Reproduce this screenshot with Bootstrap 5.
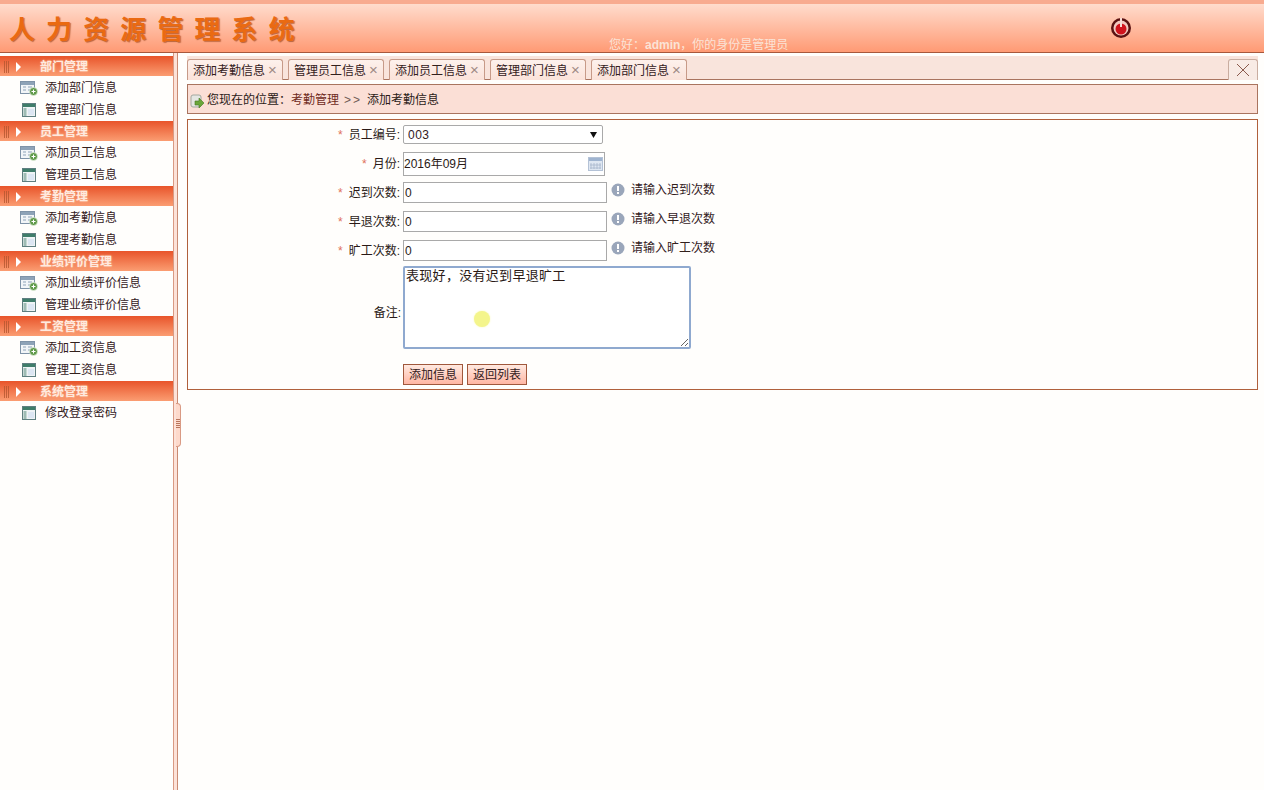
<!DOCTYPE html>
<html lang="zh-CN">
<head>
  <meta charset="UTF-8" />
  <title>人力资源管理系统</title>
  <meta name="viewport" content="width=device-width, initial-scale=1" />
  <link href="https://cdn.jsdelivr.net/npm/bootstrap@5.3.3/dist/css/bootstrap.min.css" rel="stylesheet" />
  <style>
    html, body { height: 100%; }
    body { background: #fffefc; color: #2a1a16; overflow: hidden; font: 12px/1.3 "Liberation Sans", "Noto Sans CJK SC", sans-serif; }
    .top-bar { height: 53px; border-top: 4px solid #f8ab90; border-bottom: 1px solid #a8583c; background: linear-gradient(#ffdccd, #ff9a74); overflow: hidden; }
    .sys-title { margin: 0 0 0 9px; font: 700 26px/1 "Noto Sans CJK SC", sans-serif; letter-spacing: 11.1px; color: #ea6a12; text-shadow: 1px 1px 1px #b9643c; white-space: nowrap; }
    .hello-text { position: absolute; left: 609px; top: 34px; color: #fbe3d6; font-size: 12px; line-height: 14px; white-space: nowrap; }
    .power-btn { position: absolute; left: 1110px; top: 13px; }
    .body-wrap { height: 737px; }
    .side-menu { width: 173px; flex: none; padding-top: 3px; }
    .menu-head { height: 20px; padding-top: 2px; background: linear-gradient(#e8542a, #fb9d72); color: #ffeadf; font-weight: 700; font-size: 12px; line-height: 18px; text-shadow: 0 0 2px #f9c4a8; }
    .grip { width: 5px; height: 12px; margin-left: 4px; background: repeating-linear-gradient(90deg, #b5562f 0 1px, transparent 1px 2px); opacity: .8; }
    .arrow-r { width: 0; height: 0; margin-left: 7px; margin-right: 19px; border-left: 5px solid #fff; border-top: 5px solid transparent; border-bottom: 5px solid transparent; }
    .menu-list { margin-bottom: 1px; }
    .menu-list .list-group-item { height: 22px; padding: 2px 0 0 20px; border: 0; background: transparent; color: #33201c; font-size: 12px; line-height: 20px; gap: 7px; }
    .split-bar { width: 5px; flex: none; background: #fde2d8; border-left: 1px solid #d99a84; border-right: 1px solid #c98a72; position: relative; }
    .split-handle { position: absolute; left: 2px; top: 350px; width: 5px; height: 44px; background: #fdd9cb; border: 1px solid #d99a84; border-left: 0; border-radius: 0 4px 4px 0; }
    .split-handle i { display: block; width: 4px; height: 1px; margin-bottom: 1px; background: #b9755c; }
    .split-handle span { display: block; padding-top: 15px; }
    .main-area { flex: 1; padding: 3px 6px 0 9px; min-width: 0; }
    .tab-strip { height: 24px; background: #f9e4dc; border-bottom: 1px solid #a9745f; padding-top: 3px; gap: 5px; position: relative; }
    .tab-item { width: 96px; height: 21px; padding-left: 5px; border: 1px solid #c79a88; border-bottom: 0; border-radius: 3px 3px 0 0; background: linear-gradient(#fdf1ec, #fbe2d9); color: #33201c; line-height: 19px; white-space: nowrap; }
    .tab-x { color: #a08a84; font-size: 15px; margin-left: 3px; }
    .tab-close { position: absolute; right: 0; top: 3px; width: 30px; height: 21px; border: 1px solid #c9ada0; border-bottom: 0; border-radius: 3px 3px 0 0; background: #f8ebe5; }
    .crumb-bar { height: 30px; margin-top: 4px; background: #fbdfd6; border: 1px solid #a9745f; padding: 3px 0 0 2px; gap: 2px; font-size: 12px; }
    .crumb-cur { color: #6e2a1c; }
    .crumb-sep { color: #6f5a55; margin: 0 5px; letter-spacing: 2px; }
    .form-box { height: 271px; margin-top: 5px; border: 1px solid #b0603c; padding-top: 5px; }
    .f-label { width: 215px; flex: none; padding: 2px 3px 0 0; text-align: right; font-size: 12px; white-space: nowrap; }
    .star { color: #e0705a; margin-right: 6px; }
    .f-sel { width: 200px; height: 19px; padding: 0 4px; border: 1px solid #a9a9a9; border-radius: 2px; background: #fff url("data:image/svg+xml,%3Csvg xmlns='http://www.w3.org/2000/svg' width='7' height='6'%3E%3Cpath d='M0 0h7L3.5 6z' fill='%23111'/%3E%3C/svg%3E") no-repeat 186px 6px; appearance: none; color: #33201c; font: 12px "Liberation Sans", sans-serif; letter-spacing: .5px; }
    .f-input { height: 21px; width: 204px; padding: 0 1px; border: 1px solid #a9a9a9; background: #fff; color: #2a1a16; font: 12px "Liberation Sans", "Noto Sans CJK SC", sans-serif; }
    .f-month-wrap { position: relative; width: 202px; height: 24px; }
    .f-month-wrap .f-input { width: 202px; height: 24px; padding: 0 0 3px; }
    .cal-ico { position: absolute; right: 2px; top: 5px; }
    .hint-ico { margin-left: 4px; margin-top: -5px; }
    .hint-text { margin-left: 6px; margin-top: -4px; color: #33201c; }
    .f-area { width: 288px; height: 83px; padding: 0 1px; border: 2px solid #8fa9cf; border-radius: 2px; background: #fff; color: #2a1a16; font: 13px/1.1 "Noto Sans CJK SC", sans-serif; letter-spacing: .3px; outline: none; }
    .f-note { margin-top: 10px; padding-right: 2px; }
    .f-btn { width: 60px; height: 21px; padding: 2px 0 0; border: 1px solid #a0583c; background: linear-gradient(#ffe9e0, #ffb7a4); color: #33201c; font-size: 12px; line-height: 17px; }
    .space-6 { margin-bottom: 6px; }
    .space-5 { margin-bottom: 5px; }
    .space-15 { margin-bottom: 15px; }
    .cursor-dot { position: absolute; left: 474px; top: 311px; width: 16px; height: 16px; border-radius: 50%; background: #f4f58c; box-shadow: 0 0 2px #f8f9b0; }
  </style>
</head>
<body>

<header class="top-bar position-relative d-flex align-items-center">
  <h1 class="sys-title">人力资源管理系统</h1>
  <div class="hello-text">您好：<b>admin</b>，你的身份是管理员</div>
  <svg class="power-btn" width="22" height="22" viewBox="0 0 22 22">
    <circle cx="11" cy="11" r="10" fill="#5a1212"/>
    <circle cx="11" cy="11" r="7.5" fill="#f3c9c0"/>
    <circle cx="11" cy="12" r="5.5" fill="#d0131d"/>
    <rect x="10" y="1" width="2" height="9" fill="#f6dcd6"/>
  </svg>
</header>

<div class="body-wrap d-flex">
  <aside class="side-menu" id="sideMenu"></aside>

  <div class="split-bar">
    <div class="split-handle"><span><i></i><i></i><i></i><i></i><i></i></span></div>
  </div>

  <main class="main-area">
    <div class="tab-strip d-flex" id="tabStrip">
      <div class="tab-close d-flex align-items-center justify-content-center">
        <svg width="14" height="14" viewBox="0 0 14 14"><path d="M1 1l12 12M13 1L1 13" stroke="#8a5a4c" stroke-width="1"/></svg>
      </div>
    </div>

    <div class="crumb-bar d-flex align-items-center">
      <svg width="15" height="16" viewBox="0 0 15 16">
        <rect x="1" y="2" width="10" height="12" rx="2" fill="#e4e6e2" stroke="#a3a8a0"/>
        <path d="M5 8h4V5l5 5-5 5v-3H5z" fill="#6aa63a" stroke="#437a22" stroke-width=".6"/>
      </svg>
      <span>您现在的位置：<span class="crumb-cur">考勤管理</span><span class="crumb-sep">&gt;&gt;</span>添加考勤信息</span>
    </div>

    <form class="form-box">
      <div class="d-flex align-items-center mb-2">
        <div class="f-label"><span class="star">*</span>员工编号:</div>
        <select class="f-sel"><option>003</option></select>
      </div>
      <div class="d-flex align-items-center space-6">
        <div class="f-label"><span class="star">*</span>月份:</div>
        <div class="f-month-wrap">
          <input class="f-input" type="text" value="2016年09月" />
          <svg class="cal-ico" width="15" height="14" viewBox="0 0 15 14">
            <rect x=".5" y=".5" width="14" height="13" fill="#dfe7f2" stroke="#b4c2d6"/>
            <rect x="1" y="1" width="13" height="3" fill="#9fb4d0"/>
            <path d="M3 6v6M6 6v6M9 6v6M12 6v6M2 8h11M2 11h11" stroke="#a6b6cc" stroke-width=".8"/>
          </svg>
        </div>
      </div>
      <div class="d-flex align-items-center mb-2">
        <div class="f-label"><span class="star">*</span>迟到次数:</div>
        <input class="f-input" type="text" value="0" />
        <svg class="hint-ico" width="14" height="14" viewBox="0 0 14 14"><circle cx="7" cy="7" r="6.5" fill="#9aa6ba"/><rect x="6" y="3" width="2" height="5" fill="#fff"/><rect x="6" y="9" width="2" height="2" fill="#fff"/></svg>
        <span class="hint-text">请输入迟到次数</span>
      </div>
      <div class="d-flex align-items-center mb-2">
        <div class="f-label"><span class="star">*</span>早退次数:</div>
        <input class="f-input" type="text" value="0" />
        <svg class="hint-ico" width="14" height="14" viewBox="0 0 14 14"><circle cx="7" cy="7" r="6.5" fill="#9aa6ba"/><rect x="6" y="3" width="2" height="5" fill="#fff"/><rect x="6" y="9" width="2" height="2" fill="#fff"/></svg>
        <span class="hint-text">请输入早退次数</span>
      </div>
      <div class="d-flex align-items-center space-5">
        <div class="f-label"><span class="star">*</span>旷工次数:</div>
        <input class="f-input" type="text" value="0" />
        <svg class="hint-ico" width="14" height="14" viewBox="0 0 14 14"><circle cx="7" cy="7" r="6.5" fill="#9aa6ba"/><rect x="6" y="3" width="2" height="5" fill="#fff"/><rect x="6" y="9" width="2" height="2" fill="#fff"/></svg>
        <span class="hint-text">请输入旷工次数</span>
      </div>
      <div class="d-flex align-items-center space-15">
        <div class="f-label f-note">备注:</div>
        <textarea class="f-area">表现好，没有迟到早退旷工</textarea>
      </div>
      <div class="d-flex">
        <div class="f-label"></div>
        <button type="button" class="f-btn me-1">添加信息</button>
        <button type="button" class="f-btn">返回列表</button>
      </div>
    </form>
  </main>
</div>

<div class="cursor-dot"></div>

<script>
  const ICON_ADD = `<svg width="18" height="16" viewBox="0 0 18 16">
    <rect x=".5" y="1.5" width="14" height="12" fill="#f2f5f8" stroke="#7f93a8"/>
    <rect x="1" y="2" width="13" height="3" fill="#8ea3b8"/>
    <path d="M3 7h3M3 10h3M8 7h4M8 10h2" stroke="#8ea3b8"/>
    <circle cx="13.5" cy="11.5" r="4" fill="#5f9a4a" stroke="#eef5ea" stroke-width=".7"/>
    <path d="M11.5 11.5h4M13.5 9.5v4" stroke="#fff"/></svg>`;
  const ICON_MANAGE = `<svg width="18" height="16" viewBox="0 0 18 16">
    <rect x="2.5" y="1.5" width="13" height="13" fill="#eef3f5" stroke="#5f7f80"/>
    <rect x="3" y="2" width="12" height="3" fill="#3f7d6a"/>
    <rect x="3.5" y="6" width="3" height="8" fill="#9ebcb4"/>
    <rect x="8" y="7" width="6" height="6" fill="#dce6f2"/></svg>`;

  const menus = [
    { title: "部门管理", items: ["添加部门信息", "管理部门信息"] },
    { title: "员工管理", items: ["添加员工信息", "管理员工信息"] },
    { title: "考勤管理", items: ["添加考勤信息", "管理考勤信息"] },
    { title: "业绩评价管理", items: ["添加业绩评价信息", "管理业绩评价信息"] },
    { title: "工资管理", items: ["添加工资信息", "管理工资信息"] },
    { title: "系统管理", items: ["修改登录密码"] }
  ];
  const side = document.getElementById("sideMenu");
  menus.forEach(menu => {
    const rows = menu.items.map(name => `
      <div class="list-group-item d-flex align-items-center">
        ${name.startsWith("添加") ? ICON_ADD : ICON_MANAGE}<span>${name}</span>
      </div>`).join("");
    side.insertAdjacentHTML("beforeend", `
      <div class="menu-head d-flex align-items-center">
        <span class="grip"></span><span class="arrow-r"></span><span>${menu.title}</span>
      </div>
      <div class="list-group list-group-flush menu-list">${rows}</div>`);
  });

  const tabs = ["添加考勤信息", "管理员工信息", "添加员工信息", "管理部门信息", "添加部门信息"];
  const strip = document.getElementById("tabStrip");
  tabs.forEach(name => {
    strip.insertAdjacentHTML("beforeend", `<div class="tab-item">${name}<span class="tab-x">×</span></div>`);
  });
</script>

<script src="https://cdn.jsdelivr.net/npm/bootstrap@5.3.3/dist/js/bootstrap.bundle.min.js"></script>
</body>
</html>
